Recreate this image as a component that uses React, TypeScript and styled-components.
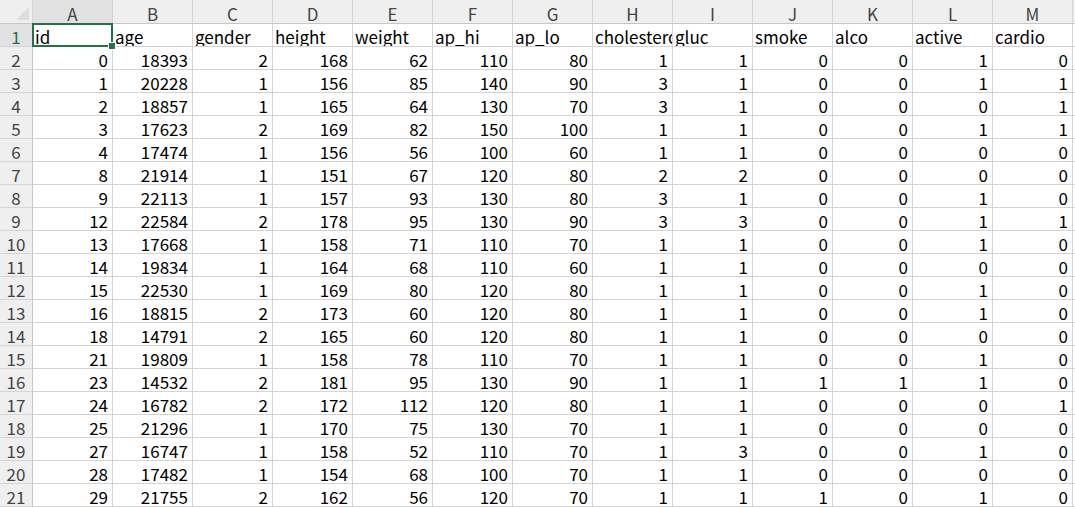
import React from "react";
import styled, { createGlobalStyle } from "styled-components";

const Global = createGlobalStyle`
  html, body { margin: 0; padding: 0; background: #ffffff; }
  body { font-family: "Noto Sans CJK SC", "Liberation Sans", sans-serif; overflow: hidden; }
`;

const headers = ["id", "age", "gender", "height", "weight", "ap_hi", "ap_lo", "cholesterol", "gluc", "smoke", "alco", "active", "cardio"];
const letters = ["A", "B", "C", "D", "E", "F", "G", "H", "I", "J", "K", "L", "M"];
const data: number[][] = [
  [0, 18393, 2, 168, 62, 110, 80, 1, 1, 0, 0, 1, 0],
  [1, 20228, 1, 156, 85, 140, 90, 3, 1, 0, 0, 1, 1],
  [2, 18857, 1, 165, 64, 130, 70, 3, 1, 0, 0, 0, 1],
  [3, 17623, 2, 169, 82, 150, 100, 1, 1, 0, 0, 1, 1],
  [4, 17474, 1, 156, 56, 100, 60, 1, 1, 0, 0, 0, 0],
  [8, 21914, 1, 151, 67, 120, 80, 2, 2, 0, 0, 0, 0],
  [9, 22113, 1, 157, 93, 130, 80, 3, 1, 0, 0, 1, 0],
  [12, 22584, 2, 178, 95, 130, 90, 3, 3, 0, 0, 1, 1],
  [13, 17668, 1, 158, 71, 110, 70, 1, 1, 0, 0, 1, 0],
  [14, 19834, 1, 164, 68, 110, 60, 1, 1, 0, 0, 0, 0],
  [15, 22530, 1, 169, 80, 120, 80, 1, 1, 0, 0, 1, 0],
  [16, 18815, 2, 173, 60, 120, 80, 1, 1, 0, 0, 1, 0],
  [18, 14791, 2, 165, 60, 120, 80, 1, 1, 0, 0, 0, 0],
  [21, 19809, 1, 158, 78, 110, 70, 1, 1, 0, 0, 1, 0],
  [23, 14532, 2, 181, 95, 130, 90, 1, 1, 1, 1, 1, 0],
  [24, 16782, 2, 172, 112, 120, 80, 1, 1, 0, 0, 0, 1],
  [25, 21296, 1, 170, 75, 130, 70, 1, 1, 0, 0, 0, 0],
  [27, 16747, 1, 158, 52, 110, 70, 1, 3, 0, 0, 1, 0],
  [28, 17482, 1, 154, 68, 100, 70, 1, 1, 0, 0, 0, 0],
  [29, 21755, 2, 162, 56, 120, 70, 1, 1, 1, 0, 1, 0],
];

const Sheet = styled.div`
  display: grid;
  grid-template-columns: 33px repeat(13, 80px) 1fr;
  grid-template-rows: 24px;
  grid-auto-rows: 23px;
  width: 1075px;
  height: 507px;
  overflow: hidden;
`;

const Corner = styled.div`
  position: relative;
  background: #efefef;
  border-right: 1px solid #d4d4d4;
  border-bottom: 1px solid #c6c6c6;
  box-sizing: border-box;
  &::after {
    content: "";
    position: absolute;
    right: 3px;
    bottom: 3px;
    width: 0;
    height: 0;
    border-left: 13px solid transparent;
    border-bottom: 13px solid #dcdcdc;
  }
`;

const ColHead = styled.div<{ $active?: boolean }>`
  display: flex;
  align-items: center;
  justify-content: center;
  background: ${(p) => (p.$active ? "#e1e1e1" : "#efefef")};
  border-right: 1px solid #d4d4d4;
  border-bottom: 1px solid #c6c6c6;
  box-sizing: border-box;
  color: #444;
  font-size: 17px;
  line-height: 1;
  padding-top: 3px;
`;

const RowHead = styled.div<{ $active?: boolean }>`
  display: flex;
  align-items: center;
  justify-content: center;
  background: ${(p) => (p.$active ? "#e1e1e1" : "#efefef")};
  border-right: 1px solid #c6c6c6;
  border-bottom: 1px solid #d4d4d4;
  box-sizing: border-box;
  color: ${(p) => (p.$active ? "#217346" : "#444")};
  font-size: 17px;
  line-height: 1;
  padding-top: 2px;
`;

const Cell = styled.div<{ $num?: boolean }>`
  position: relative;
  display: flex;
  align-items: center;
  justify-content: ${(p) => (p.$num ? "flex-end" : "flex-start")};
  padding: 2px ${(p) => (p.$num ? "4px" : "0")} 0 ${(p) => (p.$num ? "0" : "2px")};
  border-right: 1px solid #d4d4d4;
  border-bottom: 1px solid #d4d4d4;
  box-sizing: border-box;
  color: #000;
  font-size: 17px;
  line-height: 1;
  white-space: nowrap;
  overflow: hidden;
`;

const SelectedCell = styled(Cell)`
  overflow: visible;
  z-index: 2;
`;

const Selection = styled.div`
  position: absolute;
  left: -1px;
  top: -1px;
  right: -1px;
  bottom: -1px;
  border: 2px solid #217346;
  pointer-events: none;
  &::after {
    content: "";
    position: absolute;
    right: -5px;
    bottom: -5px;
    width: 6px;
    height: 6px;
    background: #217346;
    border: 1px solid #fff;
  }
`;

const Filler = styled.div<{ $head?: boolean }>`
  background: ${(p) => (p.$head ? "#efefef" : "#ffffff")};
  border-bottom: 1px solid ${(p) => (p.$head ? "#c6c6c6" : "#d4d4d4")};
  box-sizing: border-box;
`;

export default function App() {
  return (
    <>
      <Global />
      <Sheet>
        <Corner />
        {letters.map((l, i) => (
          <ColHead key={l} $active={i === 0}>
            {l}
          </ColHead>
        ))}
        <Filler $head />
        <RowHead $active>1</RowHead>
        {headers.map((h, i) =>
          i === 0 ? (
            <SelectedCell key={h}>
              {h}
              <Selection />
            </SelectedCell>
          ) : (
            <Cell key={h}>{h}</Cell>
          )
        )}
        <Filler />
        {data.map((row, r) => (
          <React.Fragment key={r}>
            <RowHead>{r + 2}</RowHead>
            {row.map((v, c) => (
              <Cell key={c} $num>
                {v}
              </Cell>
            ))}
            <Filler />
          </React.Fragment>
        ))}
      </Sheet>
    </>
  );
}
